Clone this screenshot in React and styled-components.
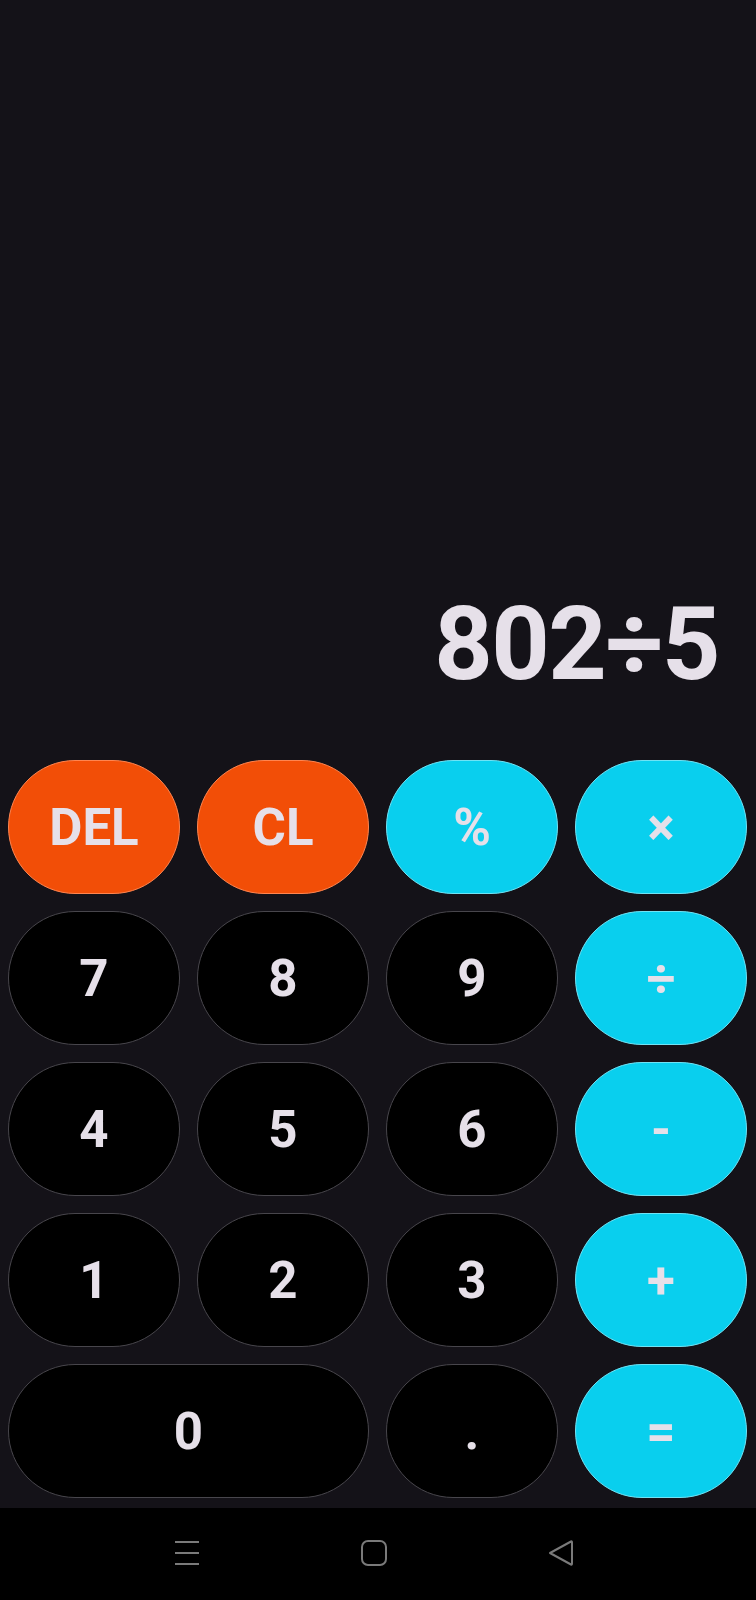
import React from "react";
import styled, { createGlobalStyle } from "styled-components";

const GlobalStyle = createGlobalStyle`
  * {
    box-sizing: border-box;
  }
  html,
  body {
    margin: 0;
    padding: 0;
    background: #141218;
  }
  body {
    font-family: Roboto, "Noto Sans", sans-serif;
  }
`;

const Screen = styled.div`
  width: 756px;
  height: 1600px;
  display: flex;
  flex-direction: column;
  background: #141218;
  color: #e6e0e9;
`;

const Display = styled.div`
  flex: 1;
  display: flex;
  align-items: flex-end;
  justify-content: flex-end;
  padding: 0 37px 65px 0;
`;

const Expression = styled.div`
  font-size: 102px;
  font-weight: 700;
  line-height: 1;
  letter-spacing: -1.5px;
`;

const Keypad = styled.div`
  display: grid;
  grid-template-columns: repeat(4, 1fr);
  grid-auto-rows: 134px;
  gap: 17px;
  padding: 0 9px 10px 8px;
`;

const Key = styled.button`
  grid-column: span ${(props) => props.span || 1};
  display: flex;
  align-items: center;
  justify-content: center;
  border-radius: 67px;
  font-family: Roboto, "Noto Sans", sans-serif;
  font-size: 51px;
  font-weight: 700;
  color: #e6e0e9;
  padding: 0;
  outline: none;
  cursor: pointer;
  background-color: ${(props) => {
    const { variant } = props;
    if (variant === "danger") return "#f24e07";
    if (variant === "op") return "#09cfee";
    return "#000000";
  }};
  border: 1.5px solid
    ${(props) => {
      const { variant } = props;
      if (variant === "danger") return "#ff8550";
      if (variant === "op") return "#6fe3f5";
      return "#48464c";
    }};
`;

const NavBar = styled.div`
  height: 92px;
  background: #000;
  display: flex;
  align-items: center;
  justify-content: center;
  gap: 161px;
  padding: 0 8px 2px 0;
`;

const NavIcon = styled.svg`
  width: 26px;
  height: 26px;
  display: block;
`;

const keys = [
  { label: "DEL", variant: "danger" },
  { label: "CL", variant: "danger" },
  { label: "%", variant: "op" },
  { label: "×", variant: "op" },
  { label: "7" },
  { label: "8" },
  { label: "9" },
  { label: "÷", variant: "op" },
  { label: "4" },
  { label: "5" },
  { label: "6" },
  { label: "-", variant: "op" },
  { label: "1" },
  { label: "2" },
  { label: "3" },
  { label: "+", variant: "op" },
  { label: "0", span: 2 },
  { label: "." },
  { label: "=", variant: "op" },
];

export default function App() {
  return (
    <>
      <GlobalStyle />
      <Screen>
        <Display>
          <Expression>802÷5</Expression>
        </Display>
        <Keypad>
          {keys.map((k) => (
            <Key key={k.label} variant={k.variant} span={k.span}>
              {k.label}
            </Key>
          ))}
        </Keypad>
        <NavBar>
          <NavIcon viewBox="0 0 26 26" fill="none" stroke="#7a7a7a" strokeWidth="2">
            <path d="M1 2h24M1 13h24M1 24h24" />
          </NavIcon>
          <NavIcon viewBox="0 0 26 26" fill="none" stroke="#7a7a7a" strokeWidth="2">
            <rect x="1" y="1" width="24" height="24" rx="6" />
          </NavIcon>
          <NavIcon viewBox="0 0 26 26" fill="none" stroke="#7a7a7a" strokeWidth="2" strokeLinejoin="round">
            <path d="M2 13 L23 1.5 Q24 1 24 2.5 V23.5 Q24 25 23 24.5 Z" />
          </NavIcon>
        </NavBar>
      </Screen>
    </>
  );
}
